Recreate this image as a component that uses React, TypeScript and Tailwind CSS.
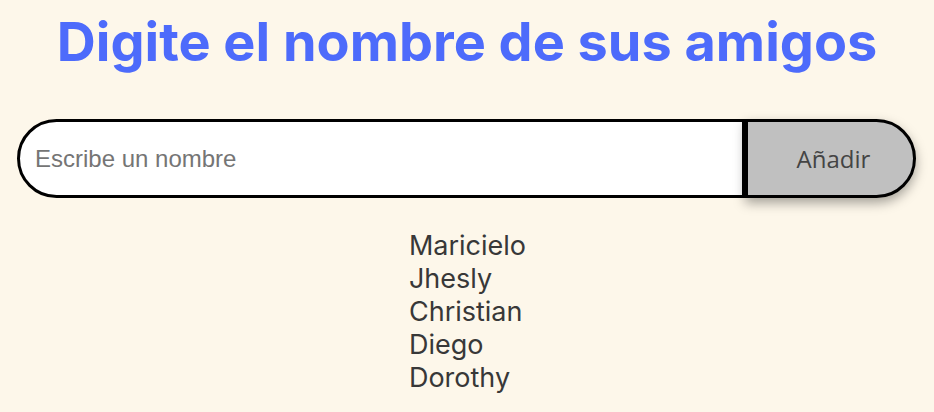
import React, { useState } from 'react';

const App = () => {
    const [names, setNames] = useState<string[]>(['Maricielo', 'Jhesly', 'Christian', 'Diego', 'Dorothy']);
    const [value, setValue] = useState('');

    const addName = () => {
        if (!value.trim()) return;
        setNames([...names, value.trim()]);
        setValue('');
    };

    return (
        <div className="min-h-[412px] w-full bg-[#fdf7ea] flex flex-col items-center font-['Inter',sans-serif]">
            <h1 className="mt-[9px] text-[54px] leading-[65px] font-bold text-[#4d6bfb]">
                Digite el nombre de sus amigos
            </h1>

            <div className="mt-[45px] flex w-[899px] h-[79px] ml-[-1px]">
                <input
                    value={value}
                    onChange={(e) => setValue(e.target.value)}
                    placeholder="Escribe un nombre"
                    className="flex-1 min-w-0 h-full bg-white border-[3px] border-black rounded-l-[40px] px-[15px] text-[24px] font-['Liberation_Sans',Arial,sans-serif] text-[#333] placeholder:text-[#757575] outline-none"
                />
                <button
                    onClick={addName}
                    className="w-[171px] h-full bg-[#c0c0c0] border-[3px] border-black rounded-r-[40px] pl-[6px] text-[24px] text-[#444] font-['Open_Sans',sans-serif] shadow-[0_5px_12px_rgba(0,0,0,0.35)]"
                >
                    Añadir
                </button>
            </div>

            <ul className="mt-[31px] text-[27px] leading-[33px] text-[#383838] ml-[1px]">
                {names.map((n, i) => (
                    <li key={i}>{n}</li>
                ))}
            </ul>
        </div>
    );
};

export default App;
